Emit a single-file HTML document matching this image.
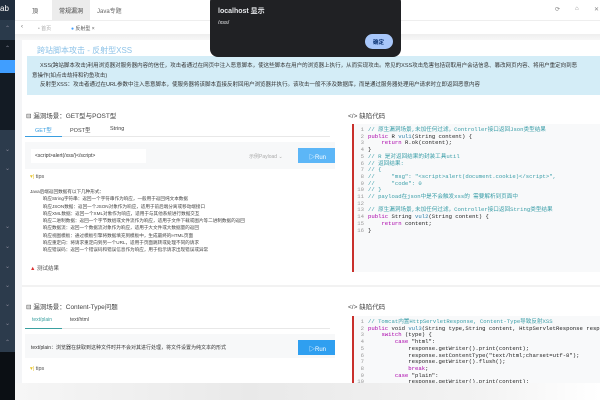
<!DOCTYPE html>
<html><head><meta charset="utf-8"><style>
*{margin:0;padding:0;box-sizing:border-box}
body{width:600px;height:400px;overflow:hidden;position:relative;background:#fff;font-family:"Liberation Sans","Noto Sans CJK SC",sans-serif;color:#333;font-size:6px}
.a{position:absolute;white-space:nowrap}
.code{font-family:"Liberation Mono","Noto Sans CJK SC",monospace;font-size:5.6px;line-height:6.7px;color:#222}
.c{color:#3a9ea8}.k{color:#a0a}.n{color:#999;display:inline-block;width:8px;text-align:right;margin-right:4px}
.f{color:#2b7fa8}
</style></head><body>
<!-- sidebar -->
<div class="a" style="left:0;top:0;width:15px;height:400px;background:#1f2d3d"></div>
<div class="a" style="left:0;top:20px;width:15px;height:20px;background:#2a3a4b"></div>
<div class="a" style="left:0;top:40px;width:15px;height:90px;background:#131b24"></div>
<div class="a" style="left:0;top:60px;width:15px;height:13px;background:#409eff"></div>
<div class="a" style="left:0;top:130px;width:15px;height:222px;background:#2c3b4c"></div>
<div class="a" style="left:0;top:352px;width:15px;height:48px;background:#0b0f14"></div>
<div class="a" style="left:0;top:4px;color:#fff;font-size:8px">ab</div>
<div class="a" style="left:5px;top:25px;color:#889;font-size:6px">⌃</div>
<div class="a" style="left:5px;top:45px;color:#889;font-size:6px">⌃</div>
<div class="a" style="left:5px;top:146px;color:#889;font-size:6px">⌄</div>
<div class="a" style="left:5px;top:165px;color:#889;font-size:6px">⌄</div>
<div class="a" style="left:5px;top:223px;color:#889;font-size:6px">⌄</div>
<div class="a" style="left:5px;top:243px;color:#889;font-size:6px">⌄</div>
<div class="a" style="left:5px;top:263px;color:#889;font-size:6px">⌄</div>
<div class="a" style="left:5px;top:282px;color:#889;font-size:6px">⌄</div>
<div class="a" style="left:5px;top:301px;color:#889;font-size:6px">⌄</div>
<div class="a" style="left:5px;top:320px;color:#889;font-size:6px">⌄</div>
<div class="a" style="left:5px;top:339px;color:#889;font-size:6px">⌃</div>
<!-- header -->
<div class="a" style="left:52px;top:0;width:38px;height:20px;background:#ececec"></div>
<div class="a" style="left:32px;top:6px;font-size:6px;color:#555">頂</div>
<div class="a" style="left:59px;top:6px;font-size:6px;color:#444">常规漏洞</div>
<div class="a" style="left:97px;top:6px;font-size:6px;color:#666">Java专题</div>
<div class="a" style="left:555px;top:6px;font-size:6px;color:#888">⟳</div>
<div class="a" style="left:575px;top:6px;font-size:6px;color:#888">⌂</div>
<div class="a" style="left:594px;top:6px;font-size:6px;color:#888">✕</div>
<div class="a" style="left:15px;top:20px;width:585px;height:1px;background:#eee"></div>
<div class="a" style="left:21px;top:24px;font-size:6px;color:#666">‹</div>
<div class="a" style="left:38px;top:25px;font-size:5px;color:#aaa">• 首页</div>
<div class="a" style="left:71px;top:25px;font-size:5px;color:#555"><span style="color:#409eff">●</span> 反射型 ×</div>
<div class="a" style="left:15px;top:34px;width:585px;height:6px;background:linear-gradient(#eee,#f7f7f7)"></div>
<div class="a" style="left:15px;top:40px;width:7px;height:343px;background:#f4f5f7"></div>
<!-- title and alert -->
<div class="a" style="left:37px;top:45px;font-size:8px;color:#8ec3e8">跨站脚本攻击 - 反射型XSS</div>
<div class="a" style="left:27px;top:56px;width:573px;height:39px;background:#d4edf7"></div>
<div class="a" style="left:40px;top:61px;font-size:5.5px;color:#333">XSS(跨站脚本攻击)利用浏览器对服务器内容的信任，攻击者通过在网页中注入恶意脚本，使这些脚本在用户的浏览器上执行，从而实现攻击。常见的XSS攻击危害包括窃取用户会话信息、篡改网页内容、将用户重定向到恶</div>
<div class="a" style="left:32px;top:71px;font-size:5.5px;color:#333">意操作(如点击劫持和钓鱼攻击)</div>
<div class="a" style="left:40px;top:80px;font-size:5.5px;color:#333">反射型XSS：攻击者通过在URL参数中注入恶意脚本，使服务器将该脚本直接反射回用户浏览器并执行。该攻击一般不涉及数据库，而是通过服务器处理用户请求时立即返回恶意内容</div>
<!-- left panel 1 -->
<div class="a" style="left:26px;top:110px;font-size:6.5px;color:#444">⊟ 漏洞场景：GET型与POST型</div>
<div class="a" style="left:35px;top:126px;font-size:5.5px;color:#3a9ee0">GET型</div>
<div class="a" style="left:70px;top:126px;font-size:5.5px;color:#444">POST型</div>
<div class="a" style="left:110px;top:126px;font-size:5.5px;color:#444">String</div>
<div class="a" style="left:25px;top:136px;width:305px;height:1px;background:#e8e8e8"></div>
<div class="a" style="left:25px;top:135.5px;width:37px;height:1.5px;background:#3a9ee0"></div>
<div class="a" style="left:25px;top:142px;width:310px;height:27px;background:#f7f8f9"></div>
<div class="a" style="left:31px;top:149px;width:115px;height:14px;background:#fff"></div>
<div class="a" style="left:35px;top:153px;font-size:5px;color:#333">&lt;script&gt;alert(/xss/)&lt;/script&gt;</div>
<div class="a" style="left:249px;top:153px;font-size:5px;color:#aaa">示例Payload ⌄</div>
<div class="a" style="left:298px;top:148px;width:37px;height:15px;background:#5cb6f7"></div>
<div class="a" style="left:309px;top:152px;font-size:6px;color:#fff">▷Run</div>
<div class="a" style="left:30px;top:174px;font-size:5.5px;color:#555"><span style="color:#e6c229">▾|</span> tips</div>
<div class="a" style="left:30px;top:188px;font-size:4.6px;line-height:7.3px;color:#444">Java后端返回数据有以下几种形式：<br>
&nbsp;&nbsp;&nbsp;&nbsp;&nbsp;&nbsp;&nbsp;&nbsp;&nbsp;&nbsp;响应String字符串：返回一个字符串作为响应，一般用于返回纯文本数据<br>
&nbsp;&nbsp;&nbsp;&nbsp;&nbsp;&nbsp;&nbsp;&nbsp;&nbsp;&nbsp;响应JSON数据：返回一个JSON对象作为响应，适用于前后端分离或移动端接口<br>
&nbsp;&nbsp;&nbsp;&nbsp;&nbsp;&nbsp;&nbsp;&nbsp;&nbsp;&nbsp;响应XML数据：返回一个XML对象作为响应，适用于与其他系统进行数据交互<br>
&nbsp;&nbsp;&nbsp;&nbsp;&nbsp;&nbsp;&nbsp;&nbsp;&nbsp;&nbsp;响应二进制数据：返回一个字节数组或文件流作为响应，适用于文件下载或图片等二进制数据的返回<br>
&nbsp;&nbsp;&nbsp;&nbsp;&nbsp;&nbsp;&nbsp;&nbsp;&nbsp;&nbsp;响应数据流：返回一个数据流对象作为响应，适用于大文件或大数据量的返回<br>
&nbsp;&nbsp;&nbsp;&nbsp;&nbsp;&nbsp;&nbsp;&nbsp;&nbsp;&nbsp;响应视图模板：通过模板引擎将数据填充到模板中，生成最终的HTML页面<br>
&nbsp;&nbsp;&nbsp;&nbsp;&nbsp;&nbsp;&nbsp;&nbsp;&nbsp;&nbsp;响应重定向：将请求重定向到另一个URL，适用于页面跳转或处理不同的请求<br>
&nbsp;&nbsp;&nbsp;&nbsp;&nbsp;&nbsp;&nbsp;&nbsp;&nbsp;&nbsp;响应错误码：返回一个错误码和错误信息作为响应，用于指示请求出现错误或异常</div>
<div class="a" style="left:30px;top:264px;font-size:5.5px;color:#555"><span style="color:#d33">▲</span> 测试结果</div>
<div class="a" style="left:22px;top:285px;width:578px;height:2px;background:#f2f2f2"></div>
<!-- left panel 2 -->
<div class="a" style="left:26px;top:301px;font-size:6.5px;color:#444">⊟ 漏洞场景：Content-Type问题</div>
<div class="a" style="left:32px;top:317px;font-size:5px;color:#3aa0a0">text/plain</div>
<div class="a" style="left:70px;top:317px;font-size:5px;color:#444">text/html</div>
<div class="a" style="left:25px;top:328px;width:305px;height:1px;background:#e8e8e8"></div>
<div class="a" style="left:25px;top:327.5px;width:37px;height:1.5px;background:#3aa0a0"></div>
<div class="a" style="left:25px;top:334px;width:310px;height:24px;background:#f7f8f9"></div>
<div class="a" style="left:31px;top:344px;font-size:5px;color:#333">text/plain：浏览器在获取到这种文件时并不会对其进行处理，将文件设置为纯文本的形式</div>
<div class="a" style="left:298px;top:340px;width:37px;height:15px;background:#2f9ff0"></div>
<div class="a" style="left:309px;top:344px;font-size:6px;color:#fff">▷Run</div>
<div class="a" style="left:30px;top:366px;font-size:5.5px;color:#555"><span style="color:#e6c229">▾|</span> tips</div>
<!-- right code 1 -->
<div class="a" style="left:348px;top:110px;font-size:6.5px;color:#444">&lt;/&gt; 缺陷代码</div>
<div class="a" style="left:352px;top:124px;width:248px;height:148px;background:#f8f9fa;border-left:2px solid #c9302c"></div>
<div class="a code" style="left:356px;top:127px">
<span class="n">1</span><span class="c">// 原生漏洞场景,未加任何过滤，Controller接口返回Json类型结果</span><br>
<span class="n">2</span><span class="k">public</span> R <span class="f">vul1</span>(String content) {<br>
<span class="n">3</span>&nbsp;&nbsp;&nbsp;&nbsp;<span class="k">return</span> R.ok(content);<br>
<span class="n">4</span>}<br>
<span class="n">5</span><span class="c">// R 是对返回结果的封装工具util</span><br>
<span class="n">6</span><span class="c">// 返回结果:</span><br>
<span class="n">7</span><span class="c">// {</span><br>
<span class="n">8</span><span class="c">//&nbsp;&nbsp;&nbsp;&nbsp;&nbsp;"msg": "&lt;script&gt;alert(document.cookie)&lt;/script&gt;",</span><br>
<span class="n">9</span><span class="c">//&nbsp;&nbsp;&nbsp;&nbsp;&nbsp;"code": 0</span><br>
<span class="n">10</span><span class="c">// }</span><br>
<span class="n">11</span><span class="c">// payload在json中是不会触发xss的 需要解析到页面中</span><br>
<span class="n">12</span><br>
<span class="n">13</span><span class="c">// 原生漏洞场景,未加任何过滤，Controller接口返回String类型结果</span><br>
<span class="n">14</span><span class="k">public</span> String <span class="f">vul2</span>(String content) {<br>
<span class="n">15</span>&nbsp;&nbsp;&nbsp;&nbsp;<span class="k">return</span> content;<br>
<span class="n">16</span>}</div>
<!-- right code 2 -->
<div class="a" style="left:348px;top:301px;font-size:6.5px;color:#444">&lt;/&gt; 缺陷代码</div>
<div class="a" style="left:352px;top:316px;width:248px;height:67px;background:#f8f9fa;border-left:2px solid #c9302c"></div>
<div class="a code" style="left:356px;top:319px">
<span class="n">1</span><span class="c">// Tomcat内置HttpServletResponse, Content-Type导致反射XSS</span><br>
<span class="n">2</span><span class="k">public</span> void <span class="f">vul3</span>(String type,String content, HttpServletResponse response<br>
<span class="n">3</span>&nbsp;&nbsp;&nbsp;&nbsp;<span class="k">switch</span> (type) {<br>
<span class="n">4</span>&nbsp;&nbsp;&nbsp;&nbsp;&nbsp;&nbsp;&nbsp;&nbsp;<span class="k">case</span> "html":<br>
<span class="n">5</span>&nbsp;&nbsp;&nbsp;&nbsp;&nbsp;&nbsp;&nbsp;&nbsp;&nbsp;&nbsp;&nbsp;&nbsp;response.getWriter().print(content);<br>
<span class="n">6</span>&nbsp;&nbsp;&nbsp;&nbsp;&nbsp;&nbsp;&nbsp;&nbsp;&nbsp;&nbsp;&nbsp;&nbsp;response.setContentType("text/html;charset=utf-8");<br>
<span class="n">7</span>&nbsp;&nbsp;&nbsp;&nbsp;&nbsp;&nbsp;&nbsp;&nbsp;&nbsp;&nbsp;&nbsp;&nbsp;response.getWriter().flush();<br>
<span class="n">8</span>&nbsp;&nbsp;&nbsp;&nbsp;&nbsp;&nbsp;&nbsp;&nbsp;&nbsp;&nbsp;&nbsp;&nbsp;<span class="k">break</span>;<br>
<span class="n">9</span>&nbsp;&nbsp;&nbsp;&nbsp;&nbsp;&nbsp;&nbsp;&nbsp;<span class="k">case</span> "plain":<br>
<span class="n">10</span>&nbsp;&nbsp;&nbsp;&nbsp;&nbsp;&nbsp;&nbsp;&nbsp;&nbsp;&nbsp;&nbsp;&nbsp;response.getWriter().print(content);</div>
<!-- bottom overlay -->
<div class="a" style="left:15px;top:383px;width:585px;height:17px;background:linear-gradient(90deg,#f6f6f6,#e9e9e9 40%,#f3f3f3 80%,#fff)"></div>
<!-- alert dialog -->
<div class="a" style="left:210px;top:-6px;width:191px;height:63px;background:#202124;border-radius:8px"></div>
<div class="a" style="left:218px;top:6px;font-size:7px;font-weight:bold;color:#e8eaed">localhost 显示</div>
<div class="a" style="left:218px;top:20px;font-size:5.5px;color:#e8eaed">/xss/</div>
<div class="a" style="left:365px;top:34px;width:28px;height:15px;background:#a8c7fa;border-radius:8px"></div>
<div class="a" style="left:373px;top:38px;font-size:5.5px;font-weight:bold;color:#062e6f">确定</div>
</body></html>
